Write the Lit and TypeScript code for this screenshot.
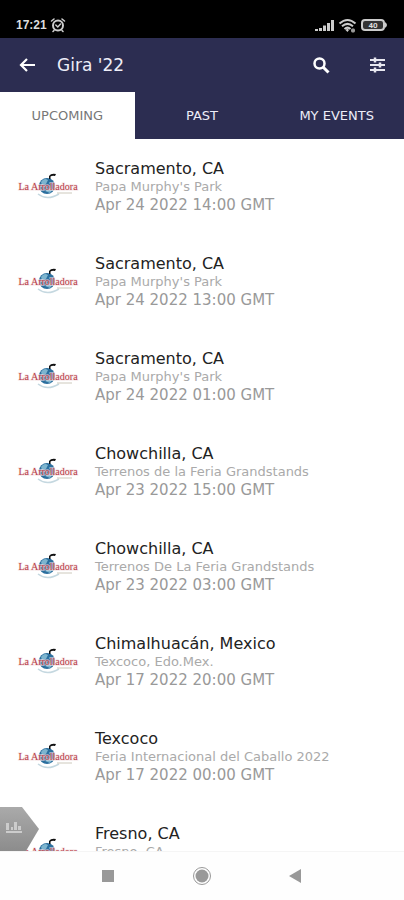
import { LitElement, html, css } from "lit";
import { customElement, state } from "lit/decorators.js";
import { classMap } from "lit/directives/class-map.js";

const events = [
  ["Sacramento, CA", "Papa Murphy's Park", "Apr 24 2022 14:00 GMT"],
  ["Sacramento, CA", "Papa Murphy's Park", "Apr 24 2022 13:00 GMT"],
  ["Sacramento, CA", "Papa Murphy's Park", "Apr 24 2022 01:00 GMT"],
  ["Chowchilla, CA", "Terrenos de la Feria Grandstands", "Apr 23 2022 15:00 GMT"],
  ["Chowchilla, CA", "Terrenos De La Feria Grandstands", "Apr 23 2022 03:00 GMT"],
  ["Chimalhuacán, Mexico", "Texcoco, Edo.Mex.", "Apr 17 2022 20:00 GMT"],
  ["Texcoco", "Feria Internacional del Caballo 2022", "Apr 17 2022 00:00 GMT"],
  ["Fresno, CA", "Fresno, CA", ""],
];

@customElement("status-bar")
class StatusBar extends LitElement {
  static styles = css`
    :host {
      display: flex; align-items: center; justify-content: space-between;
      height: 38px; padding: 12px 16px 0; box-sizing: border-box;
      background: #000; color: #ddd;
      font: bold 12px/16px "Liberation Sans", sans-serif;
    }
    .group { display: flex; align-items: center; gap: 3px; }
    svg { display: block; }
    .battery { font: bold 8px Roboto, sans-serif; }
  `;
  render() {
    return html`
      <div class="group"><span>17:21</span>
        <svg width="16" height="16" viewBox="0 0 16 16" fill="none" stroke="#ccc" stroke-width="2" stroke-linecap="round">
          <circle cx="8" cy="8.500" r="5"/><path d="M5.800 8 7.800 10 10.500 7" stroke-width="1.500"/><path d="M1.500 4 4 2M14.500 4 12 2M4 13.500 3 14.500M12 13.500 13 14.500" stroke-width="1.600"/>
        </svg>
      </div>
      <div class="group">
        <svg width="20" height="13" viewBox="0 0 20 13" fill="#ccc"><path d="M0 10h3v2H0zM4 9h3v3H4zM8 6.500h3V12H8zM12 4h3v8h-3zM16 1h3v11h-3z"/></svg>
        <svg width="19" height="15" viewBox="0 0 19 15" fill="none" stroke="#ccc" stroke-width="2"><path d="M1.500 5.500Q9.500-1.500 17.500 5.500M4 8.300Q9.500 3.500 15 8.300M6.500 11Q9.500 8.300 12.500 11"/><path d="M9.500 10.500 7.500 12 9.500 14 11 12Z" fill="#ccc" stroke="none"/><path d="M13 12.500h4M15 10.500v4" stroke-width="2.500" stroke="#999"/></svg>
        <svg width="28" height="14" viewBox="0 0 28 14"><rect x="2" y="2" width="22" height="10" rx="3" fill="#333" stroke="#ccc" stroke-width="2"/><path d="M25 4Q29 7 25 10Z" fill="#ccc"/><text class="battery" x="13" y="10" text-anchor="middle" fill="#ddd">40</text></svg>
      </div>`;
  }
}

@customElement("band-logo")
class BandLogo extends LitElement {
  static styles = css`
    :host { display: block; }
    svg { display: block; overflow: visible; }
    .name { font: 10px "Liberation Serif", serif; }
  `;
  render() {
    return html`<svg width="58" height="26" viewBox="0 0 58 26" role="img" aria-label="Band logo">
      <path d="M19 20Q28 27 40 20" fill="none" stroke="#c5d8e0" stroke-width="1.500"/>
      <path d="M38 19h15" stroke="#cdc9bc" stroke-width="1"/>
      <circle cx="28" cy="12" r="8" fill="#2b6f9e"/>
      <path d="M22 8Q25 3 29 6L27 10 23 11ZM30 14 34 15 31 19 26 17Z" fill="#7db5cf"/>
      <path d="M30 5V2Q32-1 37 0L36 2Q33 1.500 31.500 2.500V5Z" fill="#111"/>
      <text class="name" x="29" y="16" text-anchor="middle" fill="#b83b46" stroke="#f3dfe2" stroke-width="1.500" stroke-opacity=".7" paint-order="stroke">La Arrolladora</text>
    </svg>`;
  }
}

@customElement("app-root")
class AppRoot extends LitElement {
  static styles = css`
    :host {
      display: flex; flex-direction: column; height: 100vh; overflow: hidden;
      background: #fff; font-family: "DejaVu Sans", sans-serif;
    }
    button { border: 0; padding: 0; margin: 0; background: none; color: inherit; font: inherit; cursor: pointer; }
    svg { display: block; }
    header { display: flex; align-items: center; height: 54px; padding: 0 17px; background: #2c2d51; color: #eeeef8; }
    header button { display: grid; place-items: center; width: 20px; height: 32px; }
    h1 { flex: 1; margin: 0 0 0 20px; font-size: 17px; line-height: 24px; font-weight: 400; }
    .actions { display: flex; gap: 36px; }
    .tabs { display: grid; grid-template-columns: repeat(3, 1fr); height: 47px; background: #2c2d51; color: #eeeef8; font-size: 13px; }
    .tab.active { background: #fff; color: #777; }
    .content { position: relative; flex: 1; min-height: 0; overflow: hidden; border-bottom: 1px solid #f5f5f5; }
    ul { margin: 0; padding: 0; list-style: none; }
    li { display: flex; align-items: center; gap: 18px; height: 95px; padding: 0 19px; box-sizing: border-box; }
    h2 { margin: 0; font-size: 16px; line-height: 20px; font-weight: 400; color: #222; }
    p { margin: 0; font-size: 13px; line-height: 16px; color: #aaa; white-space: nowrap; }
    time { display: block; min-height: 20px; font-size: 15px; line-height: 20px; color: #999; }
    .stats { position: absolute; left: 0; bottom: 0; width: 39px; height: 44px; }
    nav { display: grid; grid-template-columns: 20px 20px 20px; justify-content: center; gap: 74px; height: 48px; align-items: center; background: #fefefe; }
  `;
  @state() active = "UPCOMING";
  render() {
    return html`
      <status-bar></status-bar>
      <header>
        <button aria-label="Back"><svg width="20" height="20" viewBox="0 0 20 20" fill="none" stroke="#fff" stroke-width="2.200"><path d="M18 10H4M10 4 4 10 10 16"/></svg></button>
        <h1>Gira '22</h1>
        <div class="actions">
          <button aria-label="Search"><svg width="20" height="20" viewBox="0 0 20 20" fill="none" stroke="#fff"><circle cx="8.500" cy="8.500" r="5" stroke-width="2.500"/><path d="M12 12 17.500 17.500" stroke-width="3"/></svg></button>
          <button aria-label="Filter"><svg width="20" height="20" viewBox="0 0 20 20" stroke="#e8e8f0" stroke-width="2"><path d="M3 5h15M3 10h15M3 15h15"/><path d="M8 2.500v5M13 7.500v5M8 12.500v5" stroke-width="2.500"/></svg></button>
        </div>
      </header>
      <div class="tabs" role="tablist">
        ${["UPCOMING", "PAST", "MY EVENTS"].map((t) => html`<button role="tab" aria-selected=${t === this.active} class=${classMap({ tab: true, active: t === this.active })} @click=${() => (this.active = t)}>${t}</button>`)}
      </div>
      <div class="content">
        <ul>${events.map(([city, venue, date]) => html`<li><band-logo></band-logo><div><h2>${city}</h2><p>${venue}</p><time>${date}</time></div></li>`)}</ul>
        <button class="stats" aria-label="Statistics"><svg width="39" height="44" viewBox="0 0 39 44"><defs><linearGradient id="shade" x2="0" y2="1"><stop stop-color="#aaa"/><stop offset="1" stop-color="#8c8c8c"/></linearGradient></defs><path d="M0 0h22L39 22 26 44H0Z" fill="url(#shade)"/><path d="M6 16h3v7H6zM11 20h2v3h-2zM14 15h3v8h-3zM18 19h3v4h-3zM6 24h16v2H6z" fill="#ccc"/></svg></button>
      </div>
      <nav aria-label="System">
        <button aria-label="Recent apps"><svg width="20" height="20" viewBox="0 0 20 20"><path d="M4 4h12v12H4z" fill="#999"/></svg></button>
        <button aria-label="Home"><svg width="20" height="20" viewBox="0 0 20 20"><circle cx="10" cy="10" r="8.500" fill="none" stroke="#999"/><circle cx="10" cy="10" r="6.500" fill="#999"/></svg></button>
        <button aria-label="Back"><svg width="20" height="20" viewBox="0 0 20 20"><path d="M3 10 15 3V17Z" fill="#999"/></svg></button>
      </nav>`;
  }
}
